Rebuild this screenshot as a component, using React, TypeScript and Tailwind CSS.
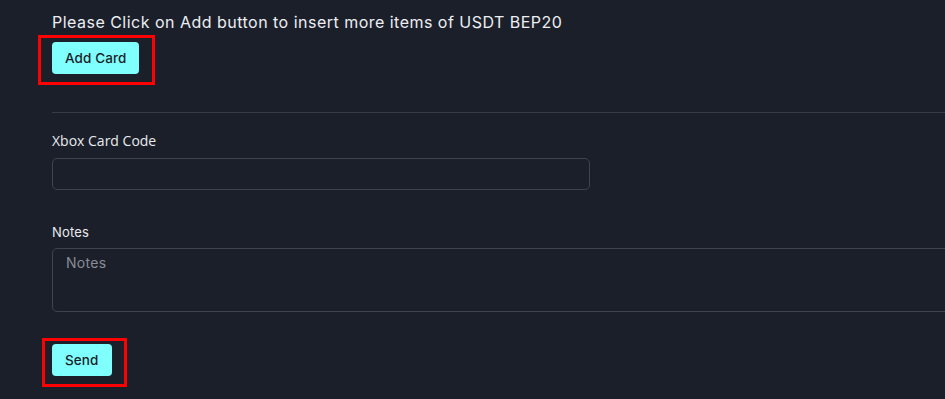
import React from "react";

export default function App() {
  const mont = { fontFamily: "Inter, 'Open Sans', sans-serif" } as React.CSSProperties;
  return (
    <div
      className="w-[945px] h-[399px] overflow-hidden bg-[#1b1f2a] text-[#e6e8ec]"
      style={{ fontFamily: "Inter, 'Noto Sans', sans-serif" }}
    >
      <div className="pl-[52px] pt-[12px] flex flex-col w-[1000px]">
        <h1 className="text-[16px] leading-[20px] font-normal text-[#eceef2] tracking-[0.48px]">
          Please Click on Add button to insert more items of USDT BEP20
        </h1>
        <div className="relative mt-[10px] self-start">
          <button className="h-8 px-[13px] rounded-[4px] bg-[#80ffff] text-[#1a1e28] text-[13.5px] leading-[20px] font-medium tracking-[0.1px]">
            Add Card
          </button>
          <div className="absolute -left-[14px] -top-[7px] w-[117px] h-[50px] border-[3px] border-[#ff0000] pointer-events-none" />
        </div>
        <div className="mt-[38px] h-px bg-[#363b47]" />
        <label
          className="mt-[18px] text-[14px] leading-[20px] text-[#e8eaee]"
          style={{ fontFamily: "'Open Sans', sans-serif" }}
        >
          Xbox Card Code
        </label>
        <input
          className="mt-[7px] w-[538px] h-8 rounded-[5px] border border-[#3e4350] bg-transparent outline-none"
          type="text"
        />
        <label className="mt-[32px] text-[13px] leading-[20px] text-[#e8eaee] tracking-[0.2px]" style={mont}>
          Notes
        </label>
        <textarea
          className="mt-[6px] w-[920px] h-[64px] rounded-[5px] border border-[#3e4350] bg-transparent outline-none resize-none pl-[13px] pt-[4px] text-[14px] leading-[20px] tracking-[0.3px] placeholder:text-[#878c96]"
          placeholder="Notes"
        />
        <div className="relative mt-[32px] self-start">
          <button className="h-8 px-[13px] rounded-[4px] bg-[#80ffff] text-[#1a1e28] text-[13.5px] leading-[20px] font-medium tracking-[0.1px]">
            Send
          </button>
          <div className="absolute -left-[10px] -top-[6px] w-[85px] h-[49px] border-[3px] border-[#ff0000] pointer-events-none" />
        </div>
      </div>
    </div>
  );
}
